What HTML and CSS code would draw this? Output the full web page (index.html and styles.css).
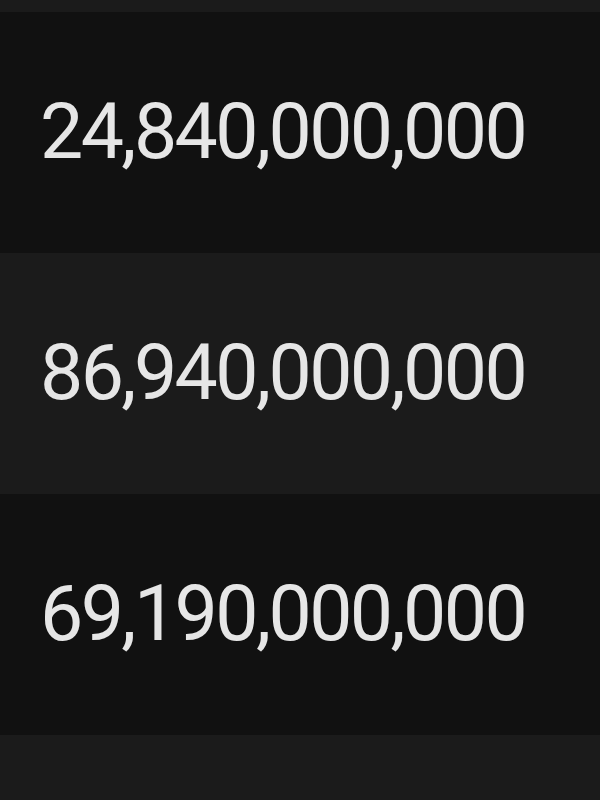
FILE: index.html
```html
<!DOCTYPE html>
<html>
<head>
<meta charset="utf-8">
<link rel="stylesheet" href="styles.css">
</head>
<body>
<div class="list">
  <div class="row alt edge-top"></div>
  <div class="row"><span class="num">24,840,000,000</span></div>
  <div class="row alt"><span class="num">86,940,000,000</span></div>
  <div class="row"><span class="num">69,190,000,000</span></div>
  <div class="row alt"></div>
</div>
</body>
</html>
```
FILE: styles.css
```css
html, body {
  margin: 0;
  padding: 0;
  background: #111111;
  overflow: hidden;
}
.list {
  display: flex;
  flex-direction: column;
}
.row {
  height: 241px;
  flex: none;
  display: flex;
  align-items: center;
  padding-left: 40px;
  background: #111111;
  box-sizing: border-box;
}
.row.alt {
  background: #1b1b1b;
}
.row.edge-top {
  height: 12px;
}
.num {
  font-family: Roboto, "Liberation Sans", sans-serif;
  font-size: 77px;
  letter-spacing: -2.6px;
  color: #e6e6e6;
  line-height: 1;
}
```
